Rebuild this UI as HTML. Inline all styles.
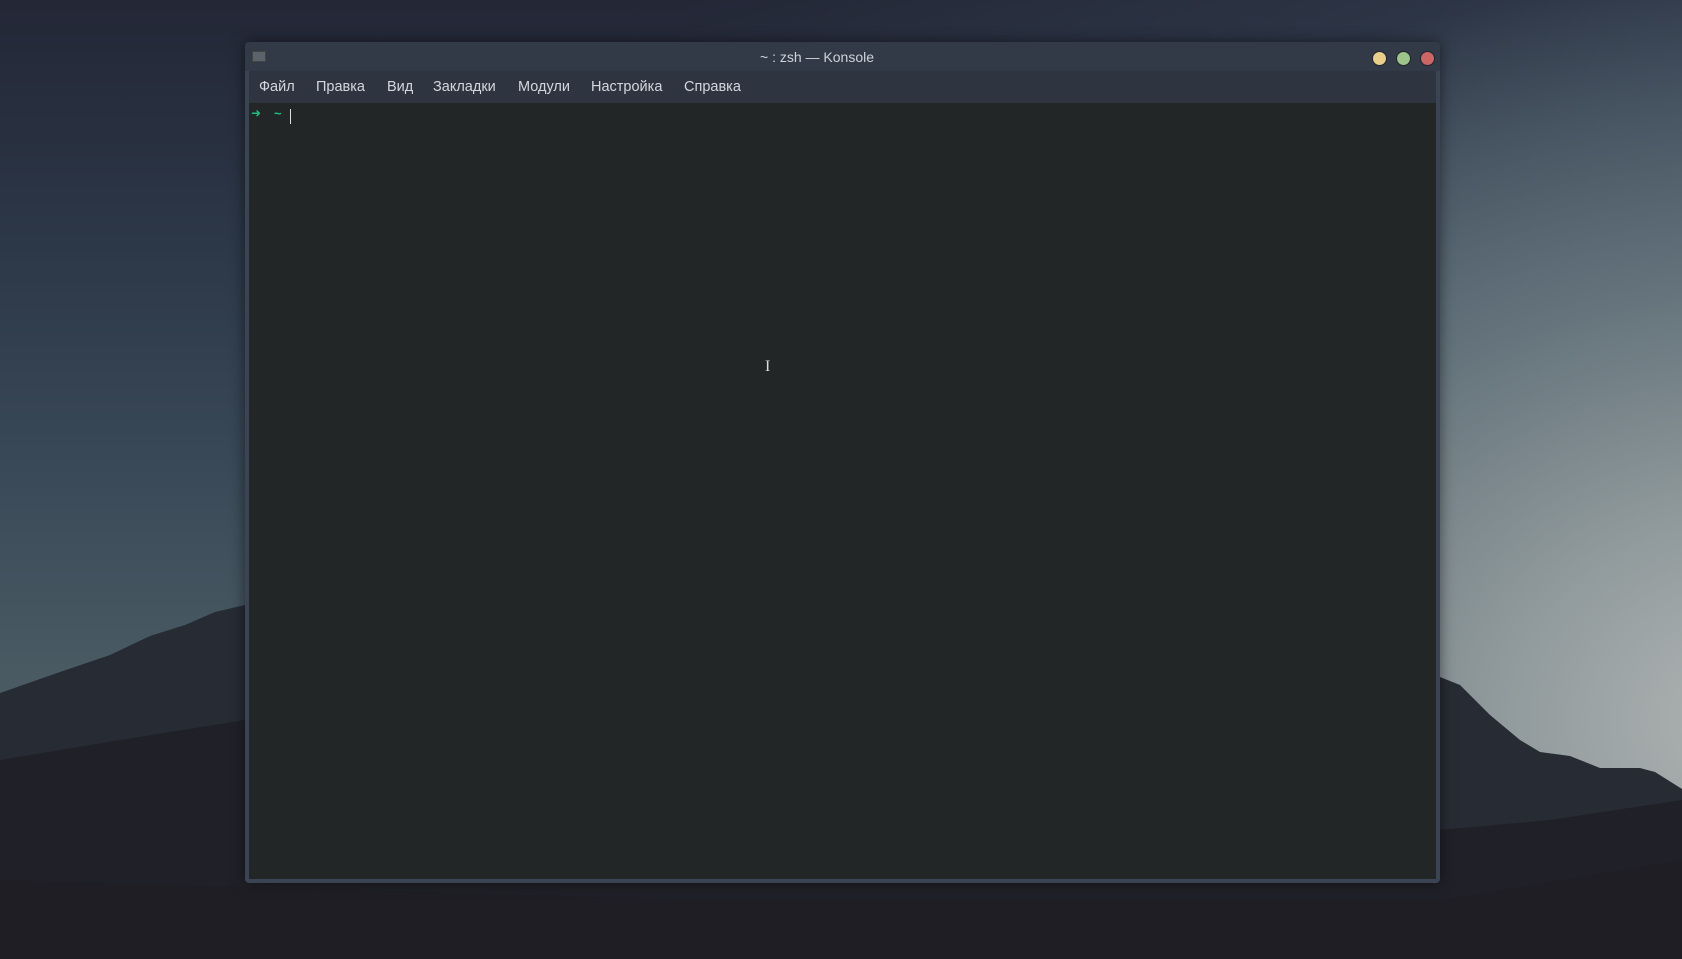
<!DOCTYPE html>
<html><head><meta charset="utf-8"><style>
*{margin:0;padding:0;box-sizing:border-box}
body{width:1682px;height:959px;overflow:hidden;position:relative;background:#1f1f25;font-family:"Liberation Sans","DejaVu Sans",sans-serif}
#sky{position:absolute;left:0;top:0;width:1682px;height:959px;
background:radial-gradient(ellipse 1000px 750px at 1780px 720px,#b3b7b6 0%,#8e989a 30%,#62717a 60%,rgba(60,75,88,0) 100%),
linear-gradient(90deg,rgba(0,0,0,0) 40%,rgba(70,90,110,.35) 100%),
linear-gradient(180deg,#232736 0%,#2c3747 25%,#3a4a58 50%,#4a5a63 70%,#53636a 100%)}
svg.m{position:absolute;left:0;top:0}
.win{position:absolute;left:245px;top:42px;width:1195px;height:841px;background:#3a4452;border-radius:4px;box-shadow:0 0 14px rgba(0,0,0,.5)}
.title{position:absolute;left:0;top:0;width:100%;height:29px;background:#323a47;border-radius:4px 4px 0 0;color:#cfd3d9;font-size:14px;line-height:30px}
.menu{position:absolute;left:4px;top:29px;width:1187px;height:32px;background:#2e3440;color:#d4d8de;font-size:14.5px}
.menu span{position:absolute;top:8px}
.term{position:absolute;left:4px;top:61px;width:1187px;height:776px;background:#222627}
.btn{position:absolute;top:9px;width:15px;height:15px;border-radius:50%;border:1px solid #20242c}
</style></head><body>
<div id="sky"></div>
<svg class="m" width="1682" height="959">
<polygon points="0,693 60,672 110,655 150,636 185,625 215,612 245,605 900,600 1440,677 1460,685 1490,715 1520,740 1540,752 1570,756 1600,768 1640,768 1655,772 1682,789 1682,959 0,959" fill="#272b34"/>
<polygon points="0,760 120,740 245,720 900,780 1440,830 1550,820 1682,800 1682,959 0,959" fill="#202128"/>
<polygon points="0,880 700,900 1440,900 1682,860 1682,959 0,959" fill="#1e1e24"/>
</svg>
<div class="win">
 <div class="title"><div style="position:absolute;left:7px;top:9px;width:14px;height:11px;background:#5d636b;border:1px solid #444"></div>
  <div style="position:absolute;left:515px;top:0">~ : zsh — Konsole</div>
  <div class="btn" style="left:1127px;background:#e8cf8a"></div>
  <div class="btn" style="left:1151px;background:#9dc48a"></div>
  <div class="btn" style="left:1175px;background:#cc6666"></div>
 </div>
 <div class="menu">
  <span style="left:10px">Файл</span><span style="left:67px">Правка</span><span style="left:138px">Вид</span><span style="left:184px">Закладки</span><span style="left:269px">Модули</span><span style="left:342px">Настройка</span><span style="left:435px">Справка</span>
 </div>
 <div class="term">
  <span style="position:absolute;left:2px;top:3px;color:#1fbf7f;font-size:12px;font-weight:bold">➜</span>
  <span style="position:absolute;left:25px;top:3px;color:#1fbf7f;font-size:13px;font-weight:bold">~</span>
  <div style="position:absolute;left:41px;top:6px;width:1px;height:15px;background:#e0e0e0"></div>
  <div style="position:absolute;left:516px;top:255px;color:#ddd;font-size:16px;font-family:'Liberation Serif',serif">I</div>
 </div>
</div>
</body></html>
